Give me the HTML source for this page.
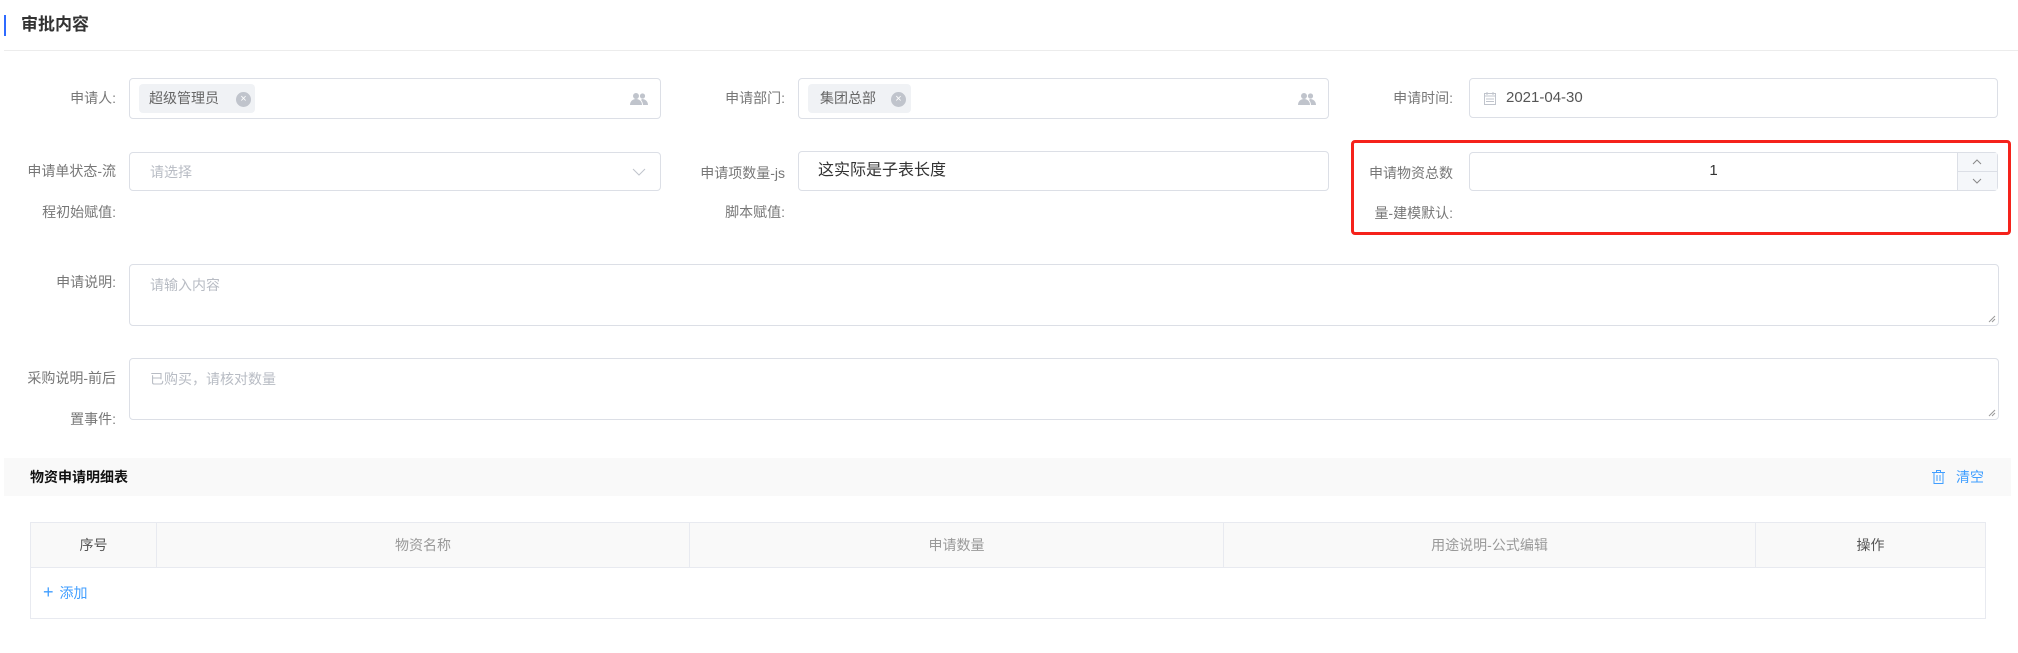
<!DOCTYPE html>
<html><head><meta charset="utf-8"><style>
*{box-sizing:border-box;margin:0;padding:0}
body{width:2018px;height:653px;background:#fff;font-family:"Liberation Sans","Noto Sans CJK SC",sans-serif;position:relative;overflow:hidden;color:#606266}
.a{position:absolute}
.lbl{position:absolute;font-size:14px;color:#777;text-align:right;line-height:20px;white-space:nowrap}
.inp{position:absolute;border:1px solid #dcdfe6;border-radius:4px;background:#fff}
.ph{color:#b8bcc4;font-size:14px}
.th{position:absolute;top:0;height:44px;line-height:44px;text-align:center;font-size:14px;color:#999;border-right:1px solid #e8eaf0}
</style></head><body>
<div class="a" style="left:4px;top:15px;width:2px;height:21px;background:#2f6bff"></div>
<div class="a" style="left:21px;top:14px;font-size:17px;font-weight:bold;color:#333;line-height:22px">审批内容</div>
<div class="a" style="left:4px;top:50px;width:2014px;height:1px;background:#ececec"></div>

<div class="lbl" style="right:1902px;top:88px">申请人:</div>
<div class="inp" style="left:129px;top:78px;width:532px;height:41px">
 <div class="a" style="left:9px;top:5px;height:29px;width:116px;background:#f0f2f5;border-radius:4px;font-size:14px;color:#666;line-height:29px;padding-left:10px">超级管理员</div>
 <div class="a" style="left:106px;top:13px;width:15px;height:15px;border-radius:50%;background:#c0c4cc;color:#fff;font-size:11px;line-height:15px;text-align:center">×</div>
 <svg class="a" style="right:12px;top:13px" width="18" height="14" viewBox="0 0 18 14"><circle cx="6" cy="4" r="3" fill="#c0c4cc"/><path d="M0 13c0-4 3-6 6-6s6 2 6 6z" fill="#c0c4cc"/><circle cx="12.5" cy="4" r="2.6" fill="#c0c4cc"/><path d="M12 7c3 0 6 2 6 6h-5c0-2-1-4-2-5z" fill="#c0c4cc"/></svg>
</div>

<div class="lbl" style="right:1233px;top:88px">申请部门:</div>
<div class="inp" style="left:798px;top:78px;width:531px;height:41px">
 <div class="a" style="left:9px;top:5px;height:29px;width:103px;background:#f0f2f5;border-radius:4px;font-size:14px;color:#666;line-height:29px;padding-left:12px">集团总部</div>
 <div class="a" style="left:92px;top:13px;width:15px;height:15px;border-radius:50%;background:#c0c4cc;color:#fff;font-size:11px;line-height:15px;text-align:center">×</div>
 <svg class="a" style="right:12px;top:13px" width="18" height="14" viewBox="0 0 18 14"><circle cx="6" cy="4" r="3" fill="#c0c4cc"/><path d="M0 13c0-4 3-6 6-6s6 2 6 6z" fill="#c0c4cc"/><circle cx="12.5" cy="4" r="2.6" fill="#c0c4cc"/><path d="M12 7c3 0 6 2 6 6h-5c0-2-1-4-2-5z" fill="#c0c4cc"/></svg>
</div>

<div class="lbl" style="right:565px;top:88px">申请时间:</div>
<div class="inp" style="left:1469px;top:78px;width:529px;height:40px">
 <svg class="a" style="left:14px;top:13px" width="12" height="13" viewBox="0 0 12 13"><rect x="0.5" y="1.5" width="11" height="11" fill="none" stroke="#c0c4cc"/><path d="M0 4h12M3 0v3M9 0v3M2 7h8M2 9.5h8" stroke="#c0c4cc"/></svg>
 <div class="a" style="left:36px;top:9px;font-size:15px;color:#555;line-height:20px">2021-04-30</div>
</div>

<div class="lbl" style="right:1902px;top:161px">申请单状态-流</div>
<div class="lbl" style="right:1902px;top:202px">程初始赋值:</div>
<div class="inp" style="left:129px;top:152px;width:532px;height:39px">
 <div class="a ph" style="left:20px;top:9px">请选择</div>
 <svg class="a" style="right:14px;top:15px" width="14" height="8" viewBox="0 0 14 8"><path d="M1 1l6 6 6-6" fill="none" stroke="#c0c4cc"/></svg>
</div>

<div class="lbl" style="right:1233px;top:163px">申请项数量-js</div>
<div class="lbl" style="right:1233px;top:202px">脚本赋值:</div>
<div class="inp" style="left:798px;top:151px;width:531px;height:40px">
 <div class="a" style="left:19px;top:9px;font-size:16px;color:#333;line-height:20px">这实际是子表长度</div>
</div>

<div class="a" style="left:1351px;top:140px;width:660px;height:95px;border:3px solid #f5221b;border-radius:4px"></div>
<div class="lbl" style="right:565px;top:163px">申请物资总数</div>
<div class="lbl" style="right:565px;top:203px">量-建模默认:</div>
<div class="inp" style="left:1469px;top:152px;width:529px;height:39px">
 <div class="a" style="left:0;right:40px;top:9px;text-align:center;font-size:15px;color:#333">1</div>
 <div class="a" style="right:0;top:0;width:40px;height:37px;border-left:1px solid #dcdfe6;background:#f5f7fa"></div>
 <div class="a" style="right:0;top:18px;width:40px;height:1px;background:#dcdfe6"></div>
 <svg class="a" style="right:15px;top:6px" width="10" height="6"><path d="M1 5l4-4 4 4" fill="none" stroke="#888"/></svg>
 <svg class="a" style="right:15px;top:25px" width="10" height="6"><path d="M1 1l4 4 4-4" fill="none" stroke="#888"/></svg>
</div>

<div class="lbl" style="right:1902px;top:272px">申请说明:</div>
<div class="inp" style="left:129px;top:264px;width:1870px;height:62px">
 <div class="a ph" style="left:20px;top:10px">请输入内容</div>
 <svg class="a" style="right:2px;bottom:2px" width="8" height="8"><path d="M1 7l6-6M4 7l3-3" stroke="#999"/></svg>
</div>
<div class="lbl" style="right:1902px;top:368px">采购说明-前后</div>
<div class="lbl" style="right:1902px;top:409px">置事件:</div>
<div class="inp" style="left:129px;top:358px;width:1870px;height:62px">
 <div class="a ph" style="left:20px;top:10px">已购买，请核对数量</div>
 <svg class="a" style="right:2px;bottom:2px" width="8" height="8"><path d="M1 7l6-6M4 7l3-3" stroke="#999"/></svg>
</div>

<div class="a" style="left:4px;top:458px;width:2007px;height:38px;background:#f9f9f9"></div>
<div class="a" style="left:30px;top:467px;font-size:14px;font-weight:bold;color:#111;line-height:20px">物资申请明细表</div>
<svg class="a" style="left:1932px;top:470px" width="13" height="14" viewBox="0 0 13 14"><path d="M0 2.5h13M4.5 2.5V0.5h4v2M2 2.5v11h9v-11M5 5v6M8 5v6" fill="none" stroke="#409eff"/></svg>
<div class="a" style="left:1956px;top:467px;font-size:14px;color:#409eff;line-height:20px">清空</div>

<div class="a" style="left:30px;top:522px;width:1956px;height:97px;border:1px solid #e8eaf0">
 <div class="a" style="left:0;top:0;width:100%;height:45px;background:#f9f9f9;border-bottom:1px solid #e8eaf0"></div>
 <div class="th" style="left:0;width:126px;color:#555">序号</div>
 <div class="th" style="left:126px;width:533px">物资名称</div>
 <div class="th" style="left:659px;width:534px">申请数量</div>
 <div class="th" style="left:1193px;width:532px">用途说明-公式编辑</div>
 <div class="th" style="left:1725px;width:229px;border-right:none;color:#555">操作</div>
 <div class="a" style="left:12px;top:59px;font-size:14px;color:#409eff;line-height:20px"><span style="font-size:18px;margin-right:6px">+</span>添加</div>
</div>
</body></html>
